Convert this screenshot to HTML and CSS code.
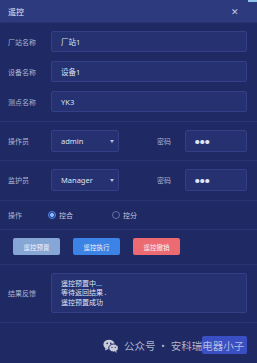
FILE: index.html
```html
<!DOCTYPE html>
<html lang="zh-CN">
<head>
  <meta charset="UTF-8" />
  <title>遥控</title>
  <link rel="stylesheet" href="styles.css">
</head>
<body>
  <div class="corner"></div>
  <div class="dialog">
    <div class="header">
      <span class="title">遥控</span>
      <span class="close">✕</span>
    </div>

    <div class="section fields">
      <div class="field">
        <label>厂站名称</label>
        <div class="input">厂站1</div>
      </div>
      <div class="field">
        <label>设备名称</label>
        <div class="input">设备1</div>
      </div>
      <div class="field">
        <label>测点名称</label>
        <div class="input">YK3</div>
      </div>
    </div>

    <div class="section user-row">
      <label>操作员</label>
      <div class="input select">admin<span class="arrow"></span></div>
      <label class="pwd-label">密码</label>
      <div class="input pwd">●●●</div>
    </div>

    <div class="section user-row second">
      <label>监护员</label>
      <div class="input select">Manager<span class="arrow"></span></div>
      <label class="pwd-label">密码</label>
      <div class="input pwd">●●●</div>
    </div>

    <div class="section radio-row">
      <label>操作</label>
      <div class="radio checked"><span class="dot"></span>控合</div>
      <div class="radio"><span class="dot"></span>控分</div>
    </div>

    <div class="section button-row">
      <button class="btn preset">遥控预置</button>
      <button class="btn exec">遥控执行</button>
      <button class="btn cancel">遥控撤销</button>
    </div>

    <div class="section result-row">
      <label>结果反馈</label>
      <div class="input result">
        遥控预置中...<br>
        等待返回结果 .<br>
        遥控预置成功
      </div>
    </div>

    <div class="footer">
      <button class="btn close-btn" aria-label="关闭"></button>
    </div>
  </div>

  <div class="watermark">
    <svg width="16" height="14" viewBox="0 0 16 14">
      <ellipse cx="6" cy="5.5" rx="5.6" ry="4.8" fill="#c9ccd8"/>
      <path d="M2.6 9 L2 11.6 L4.8 10.2 Z" fill="#c9ccd8"/>
      <ellipse cx="10.6" cy="9" rx="4.8" ry="4" fill="#c9ccd8" stroke="#1f2964" stroke-width="1"/>
      <path d="M13.2 12 L14 13.8 L11.8 12.8 Z" fill="#c9ccd8"/>
      <circle cx="4.2" cy="4.4" r="0.8" fill="#1f2964"/>
      <circle cx="7.8" cy="4.4" r="0.8" fill="#1f2964"/>
      <circle cx="9" cy="8.4" r="0.6" fill="#1f2964"/>
      <circle cx="12.2" cy="8.4" r="0.6" fill="#1f2964"/>
    </svg>
    <span>公众号 · 安科瑞电器小子</span>
  </div>
</body>
</html>
```

FILE: styles.css
```css
body {
  margin: 0;
  background-color: #1f2964;
  font-family: "Noto Sans CJK SC", "Noto Sans", sans-serif;
  color: #c4c9e0;
  width: 257px;
  height: 363px;
  overflow: hidden;
}

.corner {
  position: absolute;
  top: 0;
  right: 0;
  width: 9px;
  height: 2px;
  background-color: #8fc3e8;
}

.header {
  height: 23px;
  background-color: #2d3a7e;
  display: flex;
  align-items: center;
  justify-content: space-between;
  padding: 0 18px 0 8px;
  box-sizing: border-box;
  border-bottom: 1px solid #283470;
}

.title {
  font-size: 8px;
  color: #e2e6f4;
}

.close {
  font-size: 9px;
  color: #c9cde2;
}

.section {
  border-bottom: 1px solid #293573;
  padding: 0 10px 0 8px;
  display: flex;
  align-items: center;
}

label {
  font-size: 7px;
  color: #aeb5d2;
  width: 43px;
  flex-shrink: 0;
}

.input {
  height: 21px;
  box-sizing: border-box;
  background-color: #253170;
  border: 1px solid #333f86;
  border-radius: 2px;
  font-size: 7.5px;
  color: #dfe3f2;
  display: flex;
  align-items: center;
  padding-left: 9px;
  font-family: "Noto Sans", "Noto Sans CJK SC", sans-serif;
}

.fields {
  flex-direction: column;
  align-items: stretch;
  gap: 9px;
  padding-top: 8px;
  padding-bottom: 9px;
}

.field {
  display: flex;
  align-items: center;
}

.field .input {
  flex: 1;
}

.user-row {
  padding-top: 8px;
  padding-bottom: 8px;
}

.user-row.second {
  padding-bottom: 9px;
}

.user-row .input {
  height: 22px;
}

.select {
  width: 68px;
  position: relative;
}

.arrow {
  position: absolute;
  right: 4px;
  top: 9px;
  border-left: 2.5px solid transparent;
  border-right: 2.5px solid transparent;
  border-top: 3px solid #b8bfdb;
}

.pwd-label {
  width: auto;
  margin-left: 38px;
  margin-right: 14px;
}

.pwd {
  flex: 1;
  font-size: 4.5px;
  letter-spacing: 0.5px;
}

.radio-row {
  height: 28px;
}

.radio {
  display: flex;
  align-items: center;
  font-size: 7px;
  color: #c4c9e0;
  margin-right: 39px;
}

.radio-row label {
  width: 40px;
}

.dot {
  width: 6px;
  height: 6px;
  border: 1px solid #6470a8;
  border-radius: 50%;
  margin-right: 3px;
  box-sizing: content-box;
}

.radio.checked .dot {
  border-color: #4e8cf0;
  background: radial-gradient(circle, #8fb7f6 0 1.8px, #263a86 2.2px);
}

.button-row {
  padding: 8px 10px 9px 13px;
  gap: 13px;
}

.btn {
  width: 47px;
  height: 17px;
  border: none;
  border-radius: 2px;
  font-size: 6.5px;
  color: #f2f4fa;
  padding: 0;
  font-family: "Noto Sans CJK SC", sans-serif;
}

.preset {
  background-color: #86a6d6;
}

.exec {
  background-color: #3c83e6;
}

.cancel {
  background-color: #ec6a72;
}

.result-row {
  padding-top: 8px;
  padding-bottom: 9px;
}

.result {
  flex: 1;
  height: 40px;
  flex-direction: column;
  align-items: flex-start;
  justify-content: center;
  font-size: 7px;
  line-height: 9.5px;
  font-family: "Noto Sans CJK SC", sans-serif;
}

.footer {
  display: flex;
  justify-content: flex-end;
  padding: 13px 10px 0 0;
}

.close-btn {
  width: 45px;
  height: 18px;
  background-color: #3a4fc4;
}

.watermark {
  position: absolute;
  left: 103px;
  top: 338px;
  display: flex;
  align-items: center;
  gap: 5px;
  font-size: 10.5px;
  color: rgba(220, 222, 232, 0.78);
  font-family: "Noto Sans CJK SC", sans-serif;
}
```
